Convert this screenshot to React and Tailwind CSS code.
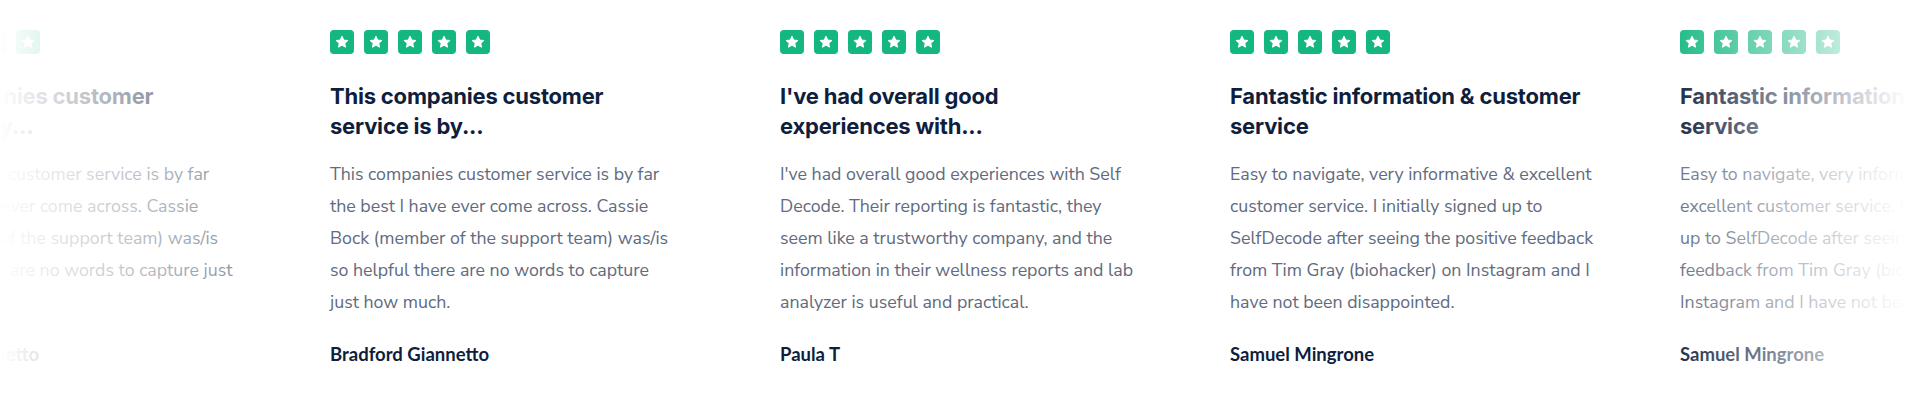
import React from 'react';

const reviews = [
  {
    title: ['This companies customer', 'service is by...'],
    body: [
      'This companies customer service is by far',
      'the best I have ever come across. Cassie',
      'Bock (member of the support team) was/is',
      'so helpful there are no words to capture just',
      'how much.',
    ],
    author: 'Bradford Giannetto',
  },
  {
    title: ['This companies customer', 'service is by...'],
    body: [
      'This companies customer service is by far',
      'the best I have ever come across. Cassie',
      'Bock (member of the support team) was/is',
      'so helpful there are no words to capture',
      'just how much.',
    ],
    author: 'Bradford Giannetto',
  },
  {
    title: ["I've had overall good", 'experiences with...'],
    body: [
      "I've had overall good experiences with Self",
      'Decode. Their reporting is fantastic, they',
      'seem like a trustworthy company, and the',
      'information in their wellness reports and lab',
      'analyzer is useful and practical.',
    ],
    author: 'Paula T',
  },
  {
    title: ['Fantastic information & customer', 'service'],
    body: [
      'Easy to navigate, very informative & excellent',
      'customer service. I initially signed up to',
      'SelfDecode after seeing the positive feedback',
      'from Tim Gray (biohacker) on Instagram and I',
      'have not been disappointed.',
    ],
    author: 'Samuel Mingrone',
  },
  {
    title: ['Fantastic information & customer', 'service'],
    body: [
      'Easy to navigate, very informative &',
      'excellent customer service. I initially signed',
      'up to SelfDecode after seeing the positive',
      'feedback from Tim Gray (biohacker) on',
      'Instagram and I have not been disappointed.',
    ],
    author: 'Samuel Mingrone',
  },
];

const StarBox = () => (
  <div className="w-6 h-6 rounded-[4px] bg-[#13b77f] flex items-center justify-center">
    <svg width="14" height="14" viewBox="0 0 24 24">
      <path
        d="M12 2.5l2.9 6.1 6.6.8-4.9 4.6 1.3 6.6L12 17.3l-5.9 3.3 1.3-6.6-4.9-4.6 6.6-.8z"
        fill="#fff"
        stroke="#fff"
        strokeWidth="2"
        strokeLinejoin="round"
      />
    </svg>
  </div>
);

const ReviewCard = ({ review }) => (
  <div className="w-[360px] shrink-0 pt-[30px]">
    <div className="flex gap-[10px]">
      {[0, 1, 2, 3, 4].map((i) => (
        <StarBox key={i} />
      ))}
    </div>

    <h3 className="mt-[27px] font-['Inter',sans-serif] text-[22px] leading-[30px] font-bold tracking-[-0.2px] text-[#0f1e3d]">
      {review.title.map((line) => (
        <span key={line} className="block whitespace-nowrap">{line}</span>
      ))}
    </h3>

    <p className="mt-[17px] font-['Nunito_Sans','Lato',sans-serif] text-[17.8px] leading-8 text-[#5f6b80]">
      {review.body.map((line) => (
        <span key={line} className="block whitespace-nowrap">{line}</span>
      ))}
    </p>

    <p className="mt-[24px] font-['Lato',sans-serif] text-[18.5px] leading-6 font-bold text-[#0f1e3d]">
      {review.author}
    </p>
  </div>
);

export default function App() {
  return (
    <section className="relative w-full h-[400px] bg-white overflow-hidden">
      {/* track is scrolled so the first card is partly off screen */}
      <div className="flex gap-[90px] -ml-[120px]">
        {reviews.map((r, i) => (
          <ReviewCard key={i} review={r} />
        ))}
      </div>

      {/* edge fades */}
      <div className="absolute inset-y-0 left-0 w-[330px] bg-gradient-to-r from-white to-white/0 pointer-events-none" />
      <div className="absolute inset-y-0 right-0 w-[260px] bg-gradient-to-l from-white from-5% to-white/0 pointer-events-none" />
    </section>
  );
}
